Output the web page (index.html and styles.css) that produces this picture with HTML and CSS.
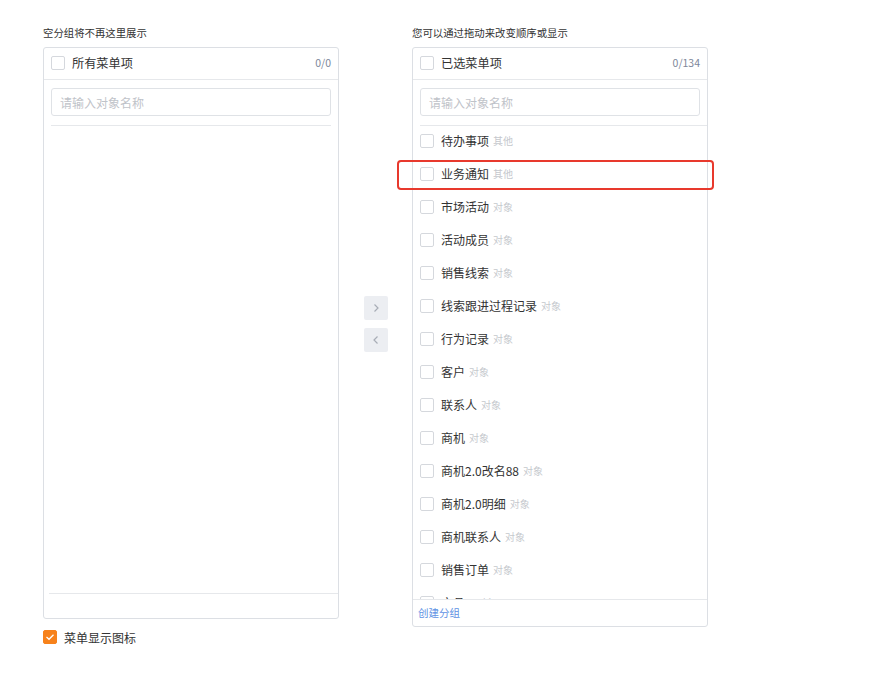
FILE: index.html
```html
<!DOCTYPE html>
<html lang="zh">
<head>
<meta charset="utf-8">
<title>菜单设置</title>
<link rel="stylesheet" href="styles.css">
</head>
<body>
<div class="page">
  <div class="transfer">
    <div class="col">
      <div class="col-label">空分组将不再这里展示</div>
      <div class="panel panel-left">
        <div class="panel-head">
          <span class="cb"></span>
          <span class="head-title">所有菜单项</span>
          <span class="count">0/0</span>
        </div>
        <div class="search"><input class="search-input" placeholder="请输入对象名称"></div>
        <div class="list list-left"></div>
        <div class="panel-foot"></div>
      </div>
    </div>
    <div class="ops">
      <button class="op-btn" aria-label="右移"><svg width="8" height="10" viewBox="0 0 8 10"><path d="M2.5 1.5 L6 5 L2.5 8.5" fill="none" stroke="#a8adb6" stroke-width="1.2"/></svg></button>
      <button class="op-btn" aria-label="左移"><svg width="8" height="10" viewBox="0 0 8 10"><path d="M5.5 1.5 L2 5 L5.5 8.5" fill="none" stroke="#a8adb6" stroke-width="1.2"/></svg></button>
    </div>
    <div class="col col-right">
      <div class="col-label">您可以通过拖动来改变顺序或显示</div>
      <div class="panel panel-right">
        <div class="panel-head">
          <span class="cb"></span>
          <span class="head-title">已选菜单项</span>
          <span class="count">0/134</span>
        </div>
        <div class="search"><input class="search-input" placeholder="请输入对象名称"></div>
        <div class="list list-right">
          <div class="item"><span class="cb"></span><span class="name">待办事项</span><span class="tag">其他</span></div>
          <div class="item"><span class="cb"></span><span class="name">业务通知</span><span class="tag">其他</span></div>
          <div class="item"><span class="cb"></span><span class="name">市场活动</span><span class="tag">对象</span></div>
          <div class="item"><span class="cb"></span><span class="name">活动成员</span><span class="tag">对象</span></div>
          <div class="item"><span class="cb"></span><span class="name">销售线索</span><span class="tag">对象</span></div>
          <div class="item"><span class="cb"></span><span class="name">线索跟进过程记录</span><span class="tag">对象</span></div>
          <div class="item"><span class="cb"></span><span class="name">行为记录</span><span class="tag">对象</span></div>
          <div class="item"><span class="cb"></span><span class="name">客户</span><span class="tag">对象</span></div>
          <div class="item"><span class="cb"></span><span class="name">联系人</span><span class="tag">对象</span></div>
          <div class="item"><span class="cb"></span><span class="name">商机</span><span class="tag">对象</span></div>
          <div class="item"><span class="cb"></span><span class="name">商机2.0改名88</span><span class="tag">对象</span></div>
          <div class="item"><span class="cb"></span><span class="name">商机2.0明细</span><span class="tag">对象</span></div>
          <div class="item"><span class="cb"></span><span class="name">商机联系人</span><span class="tag">对象</span></div>
          <div class="item"><span class="cb"></span><span class="name">销售订单</span><span class="tag">对象</span></div>
          <div class="item"><span class="cb"></span><span class="name">产品A</span><span class="tag">对象</span></div>
        </div>
        <div class="panel-foot foot-right"><a class="create-link">创建分组</a></div>
      </div>
      <div class="highlight"></div>
    </div>
  </div>
  <label class="show-icon">
    <span class="cb cb-checked"><svg width="10" height="8" viewBox="0 0 10 8"><path d="M1.5 4 L4 6.3 L8.5 1.7" fill="none" stroke="#fff" stroke-width="1.3"/></svg></span>
    <span class="show-icon-text">菜单显示图标</span>
  </label>
</div>
</body>
</html>
```
FILE: styles.css
```css
* { box-sizing: border-box; }
html, body { margin: 0; padding: 0; background: #fff; }
body {
  font-family: "Noto Sans CJK SC", "Noto Sans", "Liberation Sans", sans-serif;
  color: #333;
  width: 883px;
  height: 686px;
  overflow: hidden;
}
.page { padding: 26px 0 0 43px; }
.transfer { display: flex; align-items: flex-start; }
.col { width: 296px; display: flex; flex-direction: column; position: relative; }
.col-label {
  font-size: 10.4px;
  line-height: 14px;
  height: 14px;
  margin-bottom: 7px;
  color: #333;
  white-space: nowrap;
}
.panel {
  border: 1px solid #dcdfe4;
  border-radius: 3px;
  display: flex;
  flex-direction: column;
  overflow: hidden;
  background: #fff;
}
.panel-left { height: 572px; }
.panel-right { height: 580px; }
.panel-head {
  height: 32px;
  border-bottom: 1px solid #e6e8eb;
  display: flex;
  align-items: center;
  padding: 0 7px 2px;
  flex: none;
}
.cb {
  width: 14px;
  height: 14px;
  border: 1px solid #d5d8dd;
  border-radius: 2px;
  background: #fff;
  flex: none;
  display: inline-flex;
  align-items: center;
  justify-content: center;
}
.head-title { font-size: 12.2px; margin-left: 7px; color: #333; }
.count { margin-left: auto; font-size: 10.5px; color: #7d879a; }
.search { padding: 8px 7px 9px; flex: none; }
.search-input {
  width: 100%;
  height: 28px;
  border: 1px solid #dfe2e6;
  border-radius: 3px;
  padding: 0 8px;
  font-family: inherit;
  font-size: 12px;
  color: #333;
  outline: none;
}
.search-input::placeholder { color: #bfc3c9; }
.list {
  flex: 1;
  margin: 0 7px;
  border-top: 1px solid #e6e8eb;
  overflow: hidden;
}
.list-right { margin-right: 0; }
.item {
  height: 33px;
  display: flex;
  align-items: center;
  padding-bottom: 4px;
}
.name { font-size: 12px; margin-left: 7px; color: #333; white-space: nowrap; }
.tag { font-size: 10px; margin-left: 4px; color: #c5c8cd; white-space: nowrap; }
.panel-foot {
  flex: none;
  height: 25px;
  border-top: 1px solid #e6e8eb;
  margin-left: 5px;
}
.foot-right {
  height: 27px;
  margin-left: 0;
  padding-left: 5px;
  padding-bottom: 1px;
  display: flex;
  align-items: center;
}
.create-link { font-size: 10.5px; color: #5e92e4; cursor: pointer; }
.ops {
  width: 73px;
  display: flex;
  flex-direction: column;
  align-items: center;
  gap: 8px;
  padding-top: 270px;
}
.op-btn {
  width: 24px;
  height: 24px;
  border: none;
  border-radius: 2px;
  background: #eceef2;
  padding: 0;
  display: flex;
  align-items: center;
  justify-content: center;
}
.highlight {
  position: absolute;
  left: -15px;
  top: 134px;
  width: 317px;
  height: 30px;
  border: 2px solid #e8392d;
  border-radius: 4px;
  pointer-events: none;
}
.show-icon {
  display: flex;
  align-items: center;
  margin-top: 3px;
  height: 14px;
}
.cb-checked {
  background: #f7821b;
  border-color: #f7821b;
}
.show-icon-text { font-size: 12px; margin-left: 7px; color: #333; }
```
